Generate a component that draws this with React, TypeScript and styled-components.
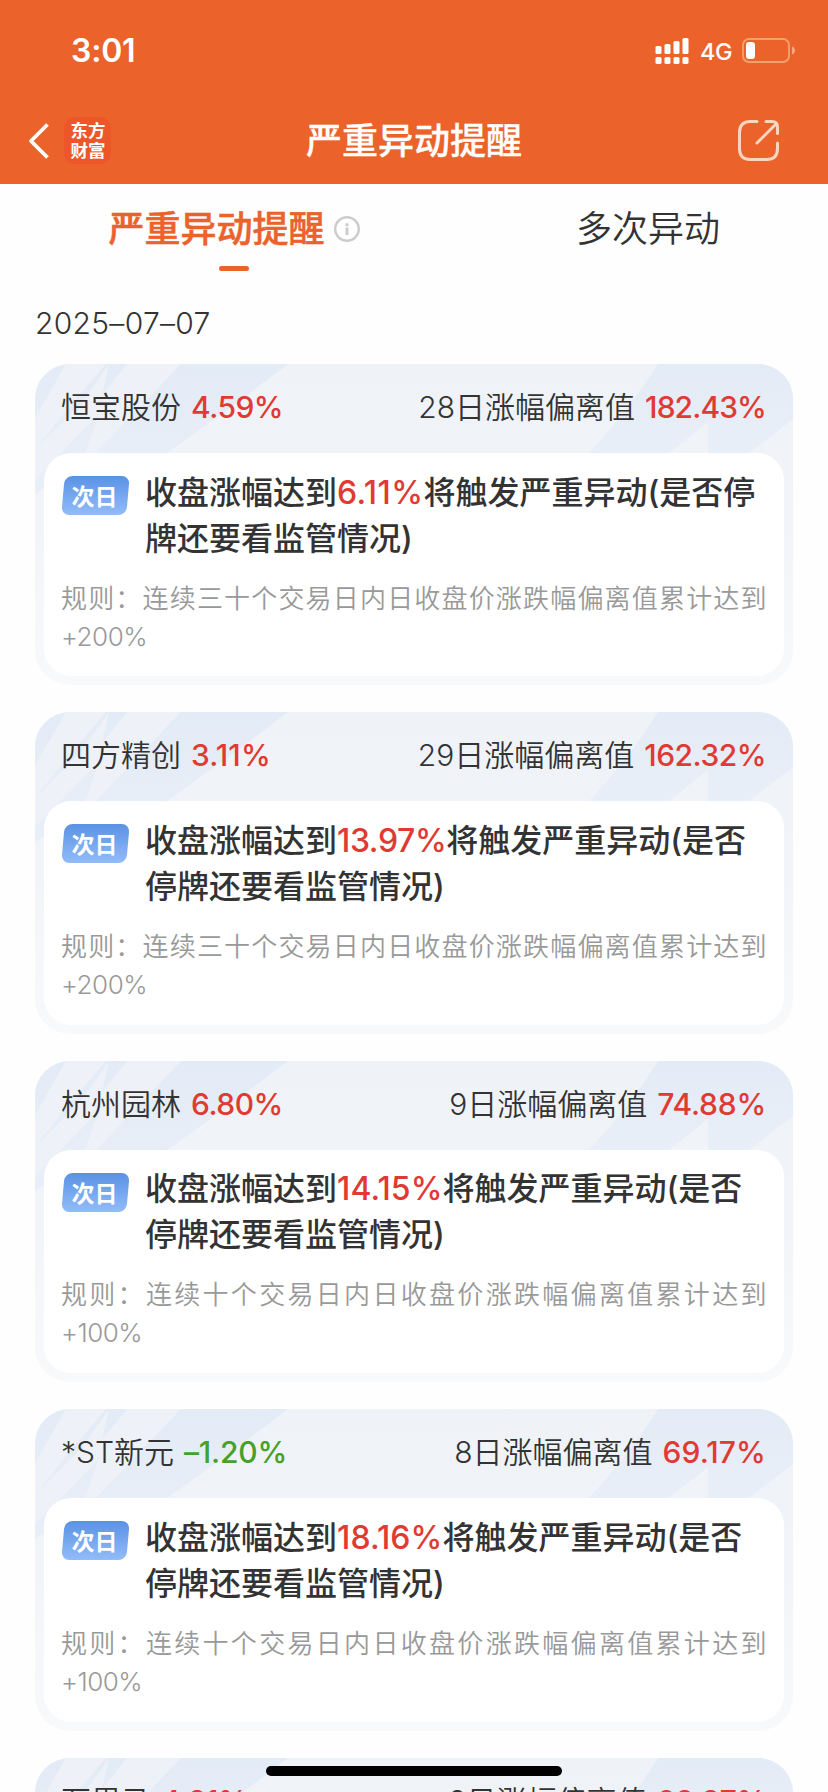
import React from "react";
import styled, { createGlobalStyle } from "styled-components";

const GlobalStyle = createGlobalStyle`
  * { box-sizing: border-box; }
  html, body { margin: 0; padding: 0; background: #fff; }
  body {
    font-family: Inter, "Noto Sans CJK SC", sans-serif;
    font-weight: 350;
    color: #333;
    overflow: hidden;
  }
`;

const Screen = styled.main`
  position: relative;
  width: 828px;
  height: 1792px;
  overflow: hidden;
  background: #fefefe;
`;

const Header = styled.header`
  height: 184px;
  background: #eb622b;
  color: #fff;
`;

const StatusBar = styled.div`
  height: 98px;
  padding: 3px 33px 0 71px;
  display: flex;
  align-items: center;
  justify-content: space-between;
`;

const Clock = styled.span`
  font-size: 32px;
  font-weight: 600;
  line-height: 40px;
  letter-spacing: -0.2px;
`;

const Indicators = styled.div`
  display: flex;
  align-items: center;
`;

const Network = styled.span`
  width: 32px;
  margin: 2px 10px 0 11px;
  font-size: 23.5px;
  font-weight: 500;
  line-height: 30px;
  letter-spacing: -0.4px;
  white-space: nowrap;
`;

const NavBar = styled.div`
  height: 86px;
  display: grid;
  grid-template-columns: 200px 1fr 200px;
  align-items: center;
  padding-bottom: 1px;
`;

const NavLeft = styled.div`
  display: flex;
  align-items: center;
  gap: 15px;
  padding-left: 28px;
`;

const Brand = styled.div`
  width: 47px;
  height: 47px;
  border-radius: 11px;
  background: #ed5629;
  padding: 3px 0 0 6.5px;
  font-family: "Noto Sans CJK SC", sans-serif;
  font-size: 17.5px;
  font-weight: 700;
  line-height: 19.5px;
  white-space: pre;
`;

const NavTitle = styled.h1`
  margin: 0;
  text-align: center;
  font-size: 36px;
  font-weight: 500;
  line-height: 52px;
  -webkit-text-stroke: 0.3px currentColor;
`;

const NavRight = styled.div`
  display: flex;
  justify-content: flex-end;
  padding-right: 48px;
`;

const Tabs = styled.nav`
  height: 96px;
  display: flex;
`;

const Tab = styled.div<{ $active?: boolean }>`
  width: ${(p) => (p.$active ? "468px" : "360px")};
  padding-top: 19px;
  display: flex;
  flex-direction: column;
  align-items: center;
  font-size: 36px;
  line-height: 52px;
  font-weight: ${(p) => (p.$active ? 500 : 350)};
  color: ${(p) => (p.$active ? "#eb622b" : "#333")};
  -webkit-text-stroke: ${(p) => (p.$active ? "0.5px currentColor" : "0")};
`;

const TabLabel = styled.div`
  display: flex;
  align-items: center;
  gap: 9px;
`;

const Underline = styled.i`
  width: 30px;
  height: 5px;
  margin-top: 11px;
  border-radius: 2.5px;
  background: #eb622b;
`;

const DateLine = styled.div`
  height: 84px;
  padding: 21px 35px 0;
  font-size: 30px;
  line-height: 44px;
  letter-spacing: 0.3px;
`;

const List = styled.section`
  display: flex;
  flex-direction: column;
  gap: 27px;
  padding: 0 35px;
`;

const Card = styled.article`
  position: relative;
  flex: none;
  height: 321.4px;
  padding: 0 9px 9px;
  border-radius: 35px;
  overflow: hidden;
  background: linear-gradient(#eff3f8, #f0f3f8 35%, #f8f9fb);
  display: flex;
  flex-direction: column;
`;

const CardArt = styled.svg`
  position: absolute;
  left: 0;
  top: 0;
`;

const CardHead = styled.div`
  position: relative;
  height: 89px;
  padding: 0 18px 3px 17px;
  display: flex;
  align-items: center;
  justify-content: space-between;
  font-size: 30px;
  line-height: 44px;
`;

const Pair = styled.div`
  display: flex;
  gap: 10px;
  white-space: nowrap;
`;

const Value = styled.span<{ $down?: boolean; $track?: number }>`
  font-weight: 550;
  letter-spacing: ${(p) => p.$track ?? 0}px;
  color: ${(p) => (p.$down ? "#46a02c" : "#e03a33")};
`;

const CardBody = styled.div`
  position: relative;
  flex: 1;
  padding: 16.5px 17.5px 0 17px;
  border-radius: 27px;
  background: #fff;
`;

const Notice = styled.div`
  display: flex;
  align-items: flex-start;
`;

const TagText = styled.span`
  position: relative;
  left: -1px;
  font-family: "Noto Sans CJK SC", sans-serif;
  font-size: 23px;
  font-weight: 700;
  line-height: 39px;
  color: #fff;
`;

const Tag = styled.div`
  position: relative;
  flex: none;
  width: 67px;
  height: 39px;
  margin: 6.5px 16px 0 1px;
  text-align: center;
  &::before {
    content: "";
    position: absolute;
    inset: 0 1px;
    border-radius: 8px;
    transform: skewX(-5deg);
    background: linear-gradient(#5a92e4, #92bcf9);
  }
`;

const Message = styled.p`
  margin: 0;
  font-size: 32px;
  font-weight: 500;
  line-height: 46px;
  white-space: nowrap;
`;

const Rule = styled.p`
  margin: 18px 0 0;
  font-size: 26px;
  line-height: 38px;
  color: #999;
  text-align: justify;
`;

const Limit = styled.span`
  letter-spacing: -0.5px;
`;

const HomeIndicator = styled.div`
  position: absolute;
  left: 266px;
  top: 1766px;
  width: 296px;
  height: 10px;
  border-radius: 5px;
  background: #000;
`;

const SignalIcon = () => (
  <svg width="34" height="26" viewBox="0 0 34 26" fill="#fff">
    <rect x="0.5" y="8" width="6" height="8" rx="1.6" />
    <rect x="9.5" y="6" width="6" height="10" rx="1.6" />
    <rect x="18.5" y="3" width="6" height="13" rx="1.6" />
    <rect x="27.5" y="0" width="6" height="16" rx="1.6" />
    {[0.5, 9.5, 18.5, 27.5].map((x) => (
      <rect key={x} x={x} y="19" width="6" height="7" rx="1.6" />
    ))}
  </svg>
);

const BatteryIcon = () => (
  <svg width="53" height="25" viewBox="0 0 53 25">
    <rect x="1" y="1" width="46" height="23" rx="6" fill="none" stroke="#f3a06f" strokeWidth="1.9" />
    <rect x="4" y="4" width="9" height="17" rx="3" fill="#fff" />
    <path d="M50 8.5c4 1 4 7 0 8z" fill="#f3a584" />
  </svg>
);

const BackIcon = () => (
  <svg width="21" height="36" viewBox="0 0 21 36" fill="none" stroke="#fff" strokeWidth="3.8">
    <path d="M19.5 1.5 3 18l16.5 16.5" strokeLinejoin="round" />
  </svg>
);

const ShareIcon = () => (
  <svg width="42" height="42" viewBox="0 0 42 42" fill="none" stroke="#fbd5c0" strokeWidth="3" strokeLinecap="round" strokeLinejoin="round">
    <path d="M19 1.500H12.500Q1.500 1.500 1.500 12.500V28.500Q1.500 39.500 12.500 39.500H28.500Q39.500 39.500 39.500 28.500V23" />
    <path d="M28 1.500H34Q39.500 1.500 39.500 7V13.500M37.500 4.500 19 23" />
  </svg>
);

const InfoIcon = () => (
  <svg width="26" height="26" viewBox="0 0 26 26">
    <circle cx="13" cy="13" r="11.800" fill="none" stroke="#ccc" strokeWidth="2.400" />
    <circle cx="13" cy="8.700" r="1.700" fill="#ccc" />
    <rect x="11.500" y="11.500" width="3" height="7.500" rx="0.800" fill="#ccc" />
  </svg>
);

const Art = () => (
  <CardArt width="758" height="130" viewBox="0 0 758 130">
    <defs>
      <linearGradient id="beam" x1="0" y1="0" x2="0" y2="1">
        <stop offset="0" stopColor="#e3ebf6" />
        <stop offset="1" stopColor="#e9eff8" />
      </linearGradient>
    </defs>
    <path d="M0 0H253Q190 48 132 89H61L0 130z" fill="url(#beam)" />
    <path d="M31 0H71L30 48 0 86V54z" fill="#eef2f8" />
    <path d="M74 0 67 31 92 0H146L61 89H50L64 50 0 115V86L46 40z" fill="#eef2f8" />
    <path d="M623 0H758V55L714 89H673V58L634 89H554Q595 45 623 0z" fill="url(#beam)" />
  </CardArt>
);

interface Item {
  name: string;
  change: string;
  changeTrack: number;
  days: number;
  deviation: string;
  deviationTrack: number;
  trigger?: string;
  triggerTrack?: number;
  rest?: [string, string];
  rule?: string;
  limit?: string;
}

const A: [string, string] = ["将触发严重异动(是否停", "牌还要看监管情况)"];
const B: [string, string] = ["将触发严重异动(是否", "停牌还要看监管情况)"];
const R30 = "规则：连续三十个交易日内日收盘价涨跌幅偏离值累计达到";
const R10 = "规则：连续十个交易日内日收盘价涨跌幅偏离值累计达到";

const items: Item[] = [
  { name: "恒宝股份", change: "4.59%", changeTrack: -0.5, days: 28, deviation: "182.43%", deviationTrack: -0.9, trigger: "6.11%", triggerTrack: 0.4, rest: A, rule: R30, limit: "+200%" },
  { name: "四方精创", change: "3.11%", changeTrack: 0.1, days: 29, deviation: "162.32%", deviationTrack: -0.5, trigger: "13.97%", triggerTrack: -0.4, rest: B, rule: R30, limit: "+200%" },
  { name: "杭州园林", change: "6.80%", changeTrack: -0.5, days: 9, deviation: "74.88%", deviationTrack: -0.2, trigger: "14.15%", triggerTrack: 0.1, rest: B, rule: R10, limit: "+100%" },
  { name: "*ST新元", change: "–1.20%", changeTrack: -0.2, days: 8, deviation: "69.17%", deviationTrack: 0.1, trigger: "18.16%", triggerTrack: 0.1, rest: B, rule: R10, limit: "+100%" },
  { name: "万里马", change: "4.21%", changeTrack: -0.4, days: 9, deviation: "68.37%", deviationTrack: -0.3 },
];

const StockCard = ({ item }: { item: Item }) => (
  <Card>
    <Art />
    <CardHead>
      <Pair>
        <span>{item.name}</span>
        <Value $track={item.changeTrack} $down={item.change.startsWith("–")}>
          {item.change}
        </Value>
      </Pair>
      <Pair>
        <span>{item.days}日涨幅偏离值</span>
        <Value $track={item.deviationTrack}>{item.deviation}</Value>
      </Pair>
    </CardHead>
    {item.rest && (
      <CardBody>
        <Notice>
          <Tag>
            <TagText>次日</TagText>
          </Tag>
          <Message>
            收盘涨幅达到<Value $track={item.triggerTrack}>{item.trigger}</Value>
            {item.rest[0]}
            <br />
            {item.rest[1]}
          </Message>
        </Notice>
        <Rule>
          {item.rule}
          <Limit>{item.limit}</Limit>
        </Rule>
      </CardBody>
    )}
  </Card>
);

export default function App() {
  return (
    <Screen>
      <GlobalStyle />
      <Header>
        <StatusBar>
          <Clock>3:01</Clock>
          <Indicators>
            <SignalIcon />
            <Network>4G</Network>
            <BatteryIcon />
          </Indicators>
        </StatusBar>
        <NavBar>
          <NavLeft>
            <BackIcon />
            <Brand>{"东方\n财富"}</Brand>
          </NavLeft>
          <NavTitle>严重异动提醒</NavTitle>
          <NavRight>
            <ShareIcon />
          </NavRight>
        </NavBar>
      </Header>
      <Tabs>
        <Tab $active>
          <TabLabel>
            严重异动提醒
            <InfoIcon />
          </TabLabel>
          <Underline />
        </Tab>
        <Tab>
          <TabLabel>多次异动</TabLabel>
        </Tab>
      </Tabs>
      <DateLine>2025–07–07</DateLine>
      <List>
        {items.map((item) => (
          <StockCard key={item.name} item={item} />
        ))}
      </List>
      <HomeIndicator />
    </Screen>
  );
}
